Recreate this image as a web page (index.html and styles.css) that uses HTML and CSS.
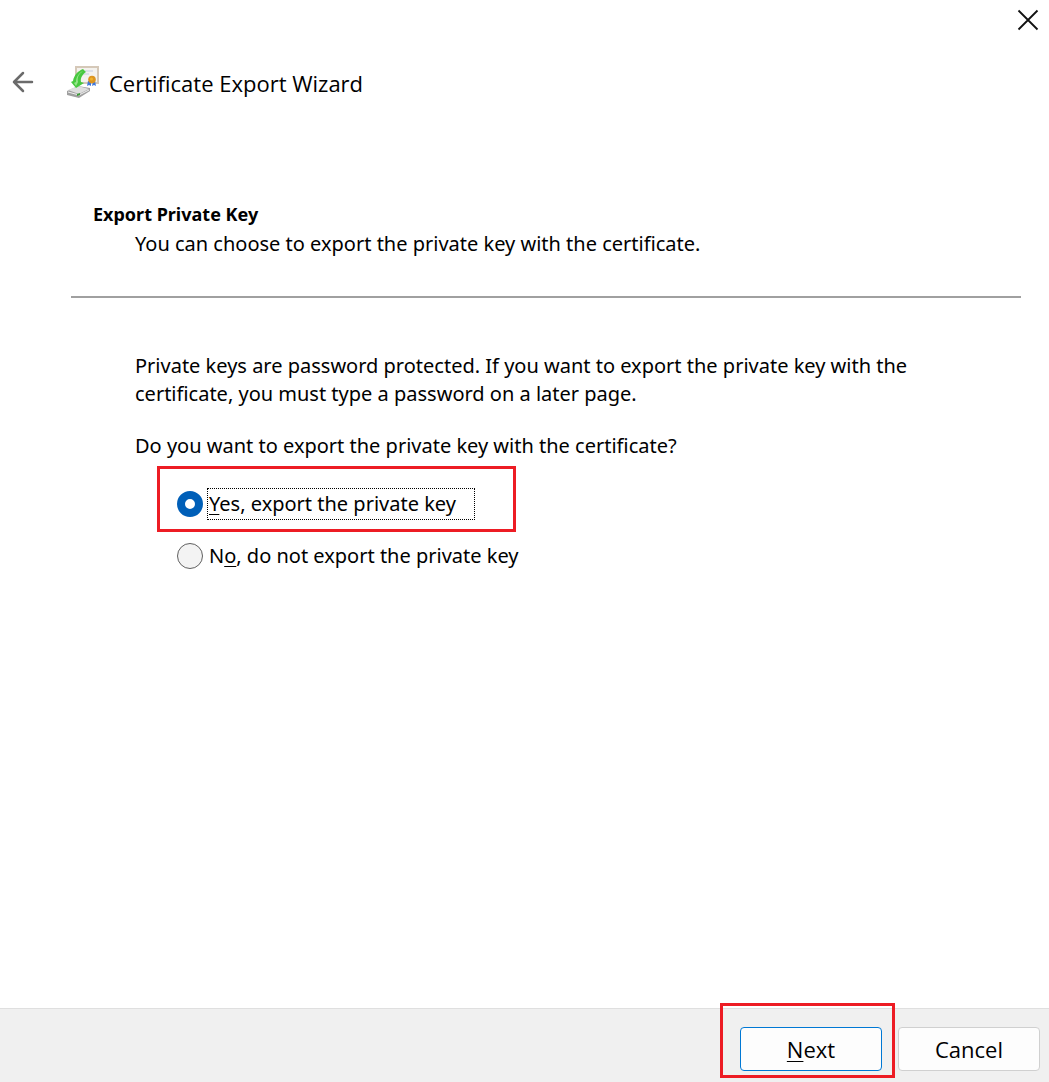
FILE: index.html
```html
<!DOCTYPE html>
<html lang="en">
<head>
  <meta charset="UTF-8">
  <meta name="viewport" content="width=device-width, initial-scale=1.0">
  <title>Certificate Export Wizard</title>
  <link rel="stylesheet" href="styles.css">
</head>
<body>
  <div class="titlebar">
    <button class="icon-btn" type="button" aria-label="Close">
      <svg width="22" height="22" viewBox="0 0 22 22"><path d="M1.5 1.5l19 19M20.5 1.5l-19 19" stroke="#111" stroke-width="1.8" fill="none"/></svg>
    </button>
  </div>

  <header class="header">
    <button class="icon-btn" type="button" aria-label="Back">
      <svg width="22" height="22" viewBox="0 0 22 22"><path d="M20 11H2M11 2L2 11l9 9" stroke="#6b6b6b" stroke-width="2.5" fill="none" stroke-linecap="round" stroke-linejoin="round"/></svg>
    </button>
    <svg class="logo" width="34" height="34" viewBox="0 0 34 34" aria-hidden="true">
      <!-- certificate -->
      <path d="M9 1h24v18H9z" fill="#d5c8b8"/>
      <path d="M11 3h20v14H11z" fill="#f4f2ee"/>
      <path d="M19 6h8M17 9h6" stroke="#d3dae6" stroke-width="1.5"/>
      <path d="M22 16h3v5l-2-1-2 1zM27 16h2l1 5-2-1-2 1z" fill="#3f78dc"/>
      <circle cx="26" cy="14.5" r="3.8" fill="#dc9520"/>
      <circle cx="25.5" cy="14" r="1.5" fill="#f2b32b"/>
      <!-- drive -->
      <path d="M1 26l11-5 12 2v3l-11 7-12-3z" fill="#a0a0a0"/>
      <path d="M2 25l10-4 11 3-10 5z" fill="#dedede"/>
      <path d="M2 27l11 3 10-5" stroke="#f0f0f0" fill="none"/>
      <path d="M11 29l3-1v2l-3 1z" fill="#3c9c37"/>
      <!-- arrow -->
      <path d="M17 4c-5 2-9 6-10 12l-2 1 5 6 8-5-3-1c-1-4 2-8 5-10z" fill="#48c840"/>
      <path d="M17 6c-4 2-7 6-7 11l-2 1 2 3 2-4c-1-5 1-8 5-11z" fill="#96e58b"/>
    </svg>
    <h1 class="title">Certificate Export Wizard</h1>
  </header>

  <main class="content">
    <div class="intro">
      <h2 class="heading">Export Private Key</h2>
      <p class="subheading">You can choose to export the private key with the certificate.</p>
    </div>

    <div class="page">
      <p>Private keys are password protected. If you want to export the private key with the certificate, you must type a password on a later page.</p>
      <fieldset class="choices">
        <legend>Do you want to export the private key with the certificate?</legend>
        <div class="choice marked">
          <input type="radio" name="export" id="export-yes" checked>
          <label class="focused" for="export-yes"><span class="key">Y</span>es, export the private key</label>
        </div>
        <div class="choice">
          <input type="radio" name="export" id="export-no">
          <label for="export-no">N<span class="key">o</span>, do not export the private key</label>
        </div>
      </fieldset>
    </div>
  </main>

  <footer class="footer">
    <div class="marked">
      <button class="btn primary" type="button"><span class="key">N</span>ext</button>
    </div>
    <button class="btn" type="button">Cancel</button>
  </footer>
</body>
</html>
```

FILE: styles.css
```css
:root {
  --accent: #005fb8;
  --mark: #ed1c24;
}

* { box-sizing: border-box; }

body {
  margin: 0;
  min-height: 100vh;
  display: flex;
  flex-direction: column;
  background: #fff;
  color: #000;
  font: 20px/28px "Noto Sans", sans-serif;
}
h1, h2, p { margin: 0; font-weight: normal; }
.key { text-decoration: underline; text-decoration-thickness: 1px; text-underline-offset: 3px; }

/* Header */
.titlebar { display: flex; justify-content: flex-end; padding: 9px 10px; }
.icon-btn { display: flex; padding: 0; border: 0; background: none; }
.header { display: flex; align-items: center; padding: 24px 12px 0; }
.logo { margin: 0 9px 0 32px; }
.title { padding-top: 2px; font-size: 22px; line-height: 34px; font-family: "Open Sans", sans-serif; }

/* Content */
.content { flex: 1; padding: 100px 28px 32px 71px; }
.intro { padding: 0 22px 38px; border-bottom: 2px solid #a0a0a0; }
.heading { margin-bottom: 2px; font-size: 18px; font-weight: bold; line-height: 28px; }
.subheading { padding-left: 42px; }
.page { padding: 54px 64px 0; }

/* Radio choices */
.choices { margin: 24px 0 0; padding: 0; border: 0; }
.choices legend { padding: 0; }
.choice { display: flex; align-items: center; gap: 4px; width: fit-content; margin-left: 22px; padding: 0 20px; }
.choice label { padding: 1px; border: 1px solid transparent; }
.choice .focused { padding-right: 18px; border: 1px dotted #000; }
.choice input {
  appearance: none;
  width: 26px;
  height: 26px;
  margin: 0;
  border: 1px solid #606060;
  border-radius: 50%;
  background: #f3f3f3;
}
.choice input:checked { border: 8px solid var(--accent); background: #fff; }
.marked { border: 3px solid var(--mark); }
.choice.marked { margin-top: 6px; margin-bottom: 8px; padding: 19px 38px 9px 17px; }

/* Footer */
.footer { display: flex; justify-content: flex-end; align-items: center; gap: 3px; height: 74px; padding-right: 9px; border-top: 1px solid #dfdfdf; background: #f0f0f0; }
.footer .marked { margin-top: -10px; padding: 21px 10px 4px 17px; }
.footer > .btn { margin-top: 7px; }
.btn { width: 142px; height: 44px; padding: 0; border: 1px solid #d0d0d0; border-radius: 4px; background: #fdfdfd; color: #000; font: 22px/32px "Open Sans", sans-serif; }
.btn.primary { display: block; border-color: #0078d4; }
```
